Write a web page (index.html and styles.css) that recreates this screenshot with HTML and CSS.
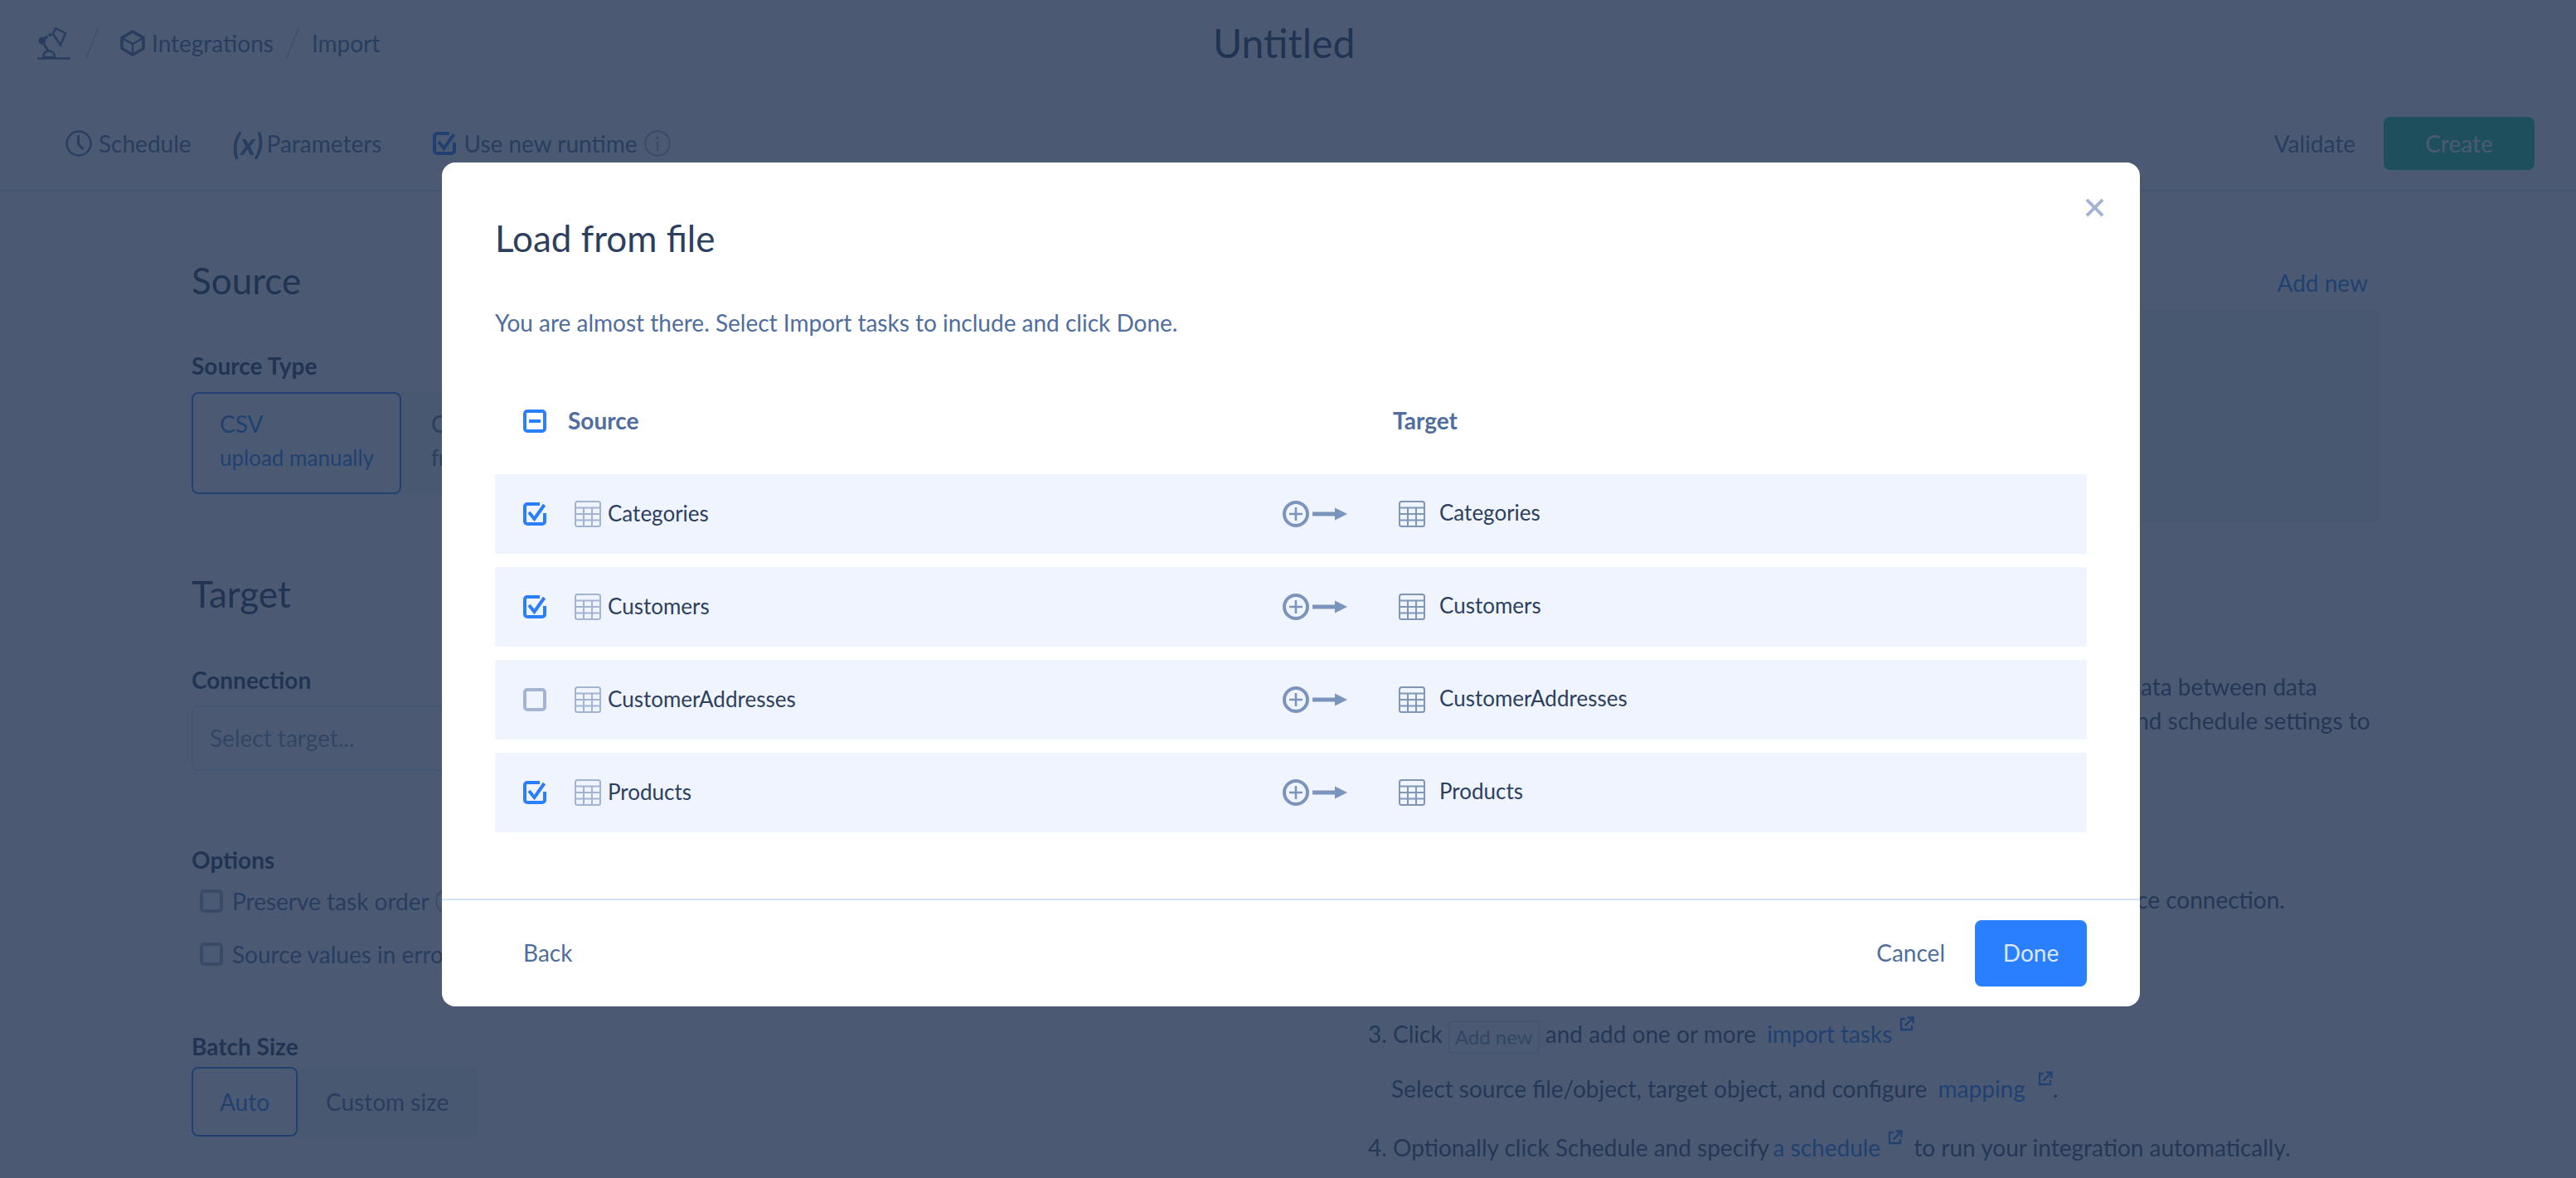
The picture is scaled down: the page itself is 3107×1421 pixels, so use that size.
FILE: index.html
```html
<!DOCTYPE html>
<html lang="en">
<head>
<meta charset="utf-8">
<title>Untitled</title>
<link rel="stylesheet" href="styles.css">
</head>
<body>
<svg class="sprite" xmlns="http://www.w3.org/2000/svg">
  <symbol id="checked" viewBox="0 0 28 28"><path d="M20 2H5a3 3 0 0 0-3 3v18a3 3 0 0 0 3 3h18a3 3 0 0 0 3-3V13" fill="none" stroke="currentColor" stroke-width="4"/><path d="M7 12l6.500 8L25.500 3" fill="none" stroke="currentColor" stroke-width="4"/></symbol>
  <symbol id="mixed" viewBox="0 0 28 28"><rect x="2" y="2" width="24" height="24" rx="3" fill="none" stroke="currentColor" stroke-width="4"/><path d="M7 14h14" stroke="currentColor" stroke-width="4"/></symbol>
  <symbol id="empty" viewBox="0 0 28 28"><rect x="2" y="2" width="24" height="24" rx="3" fill="none" stroke="currentColor" stroke-width="4"/></symbol>
  <symbol id="table" viewBox="0 0 32 32"><rect x="1" y="1" width="30" height="30" rx="2.5" fill="none" stroke="currentColor" stroke-width="2"/><path d="M1 8.500h30M1 16h30M1 23.500h30M11 8.500V31M21 8.500V31" fill="none" stroke="currentColor" stroke-width="2"/></symbol>
  <symbol id="map" viewBox="0 0 78 32"><circle cx="16" cy="16" r="14" fill="none" stroke="currentColor" stroke-width="4"/><path d="M16 8v16M8 16h16" stroke="currentColor" stroke-width="2.600"/><path d="M36 13.500h27V8.500l15 7.500-15 7.500V18.500H36z" fill="currentColor"/></symbol>
  <symbol id="ext" viewBox="0 0 18 18"><path d="M7 3H2v13h13v-5" fill="none" stroke="currentColor" stroke-width="2.400"/><path d="M6.500 11.500 16 2M9.500 1.500H16.500V8.500" fill="none" stroke="currentColor" stroke-width="2.400"/></symbol>
  <symbol id="info" viewBox="0 0 32 32"><circle cx="16" cy="16" r="14.800" fill="none" stroke="currentColor" stroke-width="2"/><circle cx="16" cy="9.500" r="1.800" fill="currentColor"/><path d="M16 14v11" stroke="currentColor" stroke-width="2.400"/></symbol>
</svg>

<header class="topbar">
  <nav class="crumbs">
    <svg class="logo" viewBox="0 0 40 40"><path d="M0 38.500h40" stroke="currentColor" stroke-width="2.500"/><path d="M7 37c0-5 3-7.500 7-7.500s7 2.500 7 7.500z" fill="none" stroke="currentColor" stroke-width="2.500"/><path d="M13 29 8 21" stroke="currentColor" stroke-width="3"/><circle cx="6" cy="17" r="4.500" fill="currentColor"/><path d="M9 14 19 8" stroke="currentColor" stroke-width="3.500" stroke-dasharray="4 1.500"/><path d="M22 2l12 6-6 14.500L19 9z" fill="none" stroke="currentColor" stroke-width="2.500"/></svg>
    <span class="slash slash-first"></span>
    <svg class="cube" viewBox="0 0 30 32"><path d="M15 2 28 9.500v13L15 30 2 22.500v-13z" fill="none" stroke="currentColor" stroke-width="3.600"/><path d="M2.500 10 15 17l12.500-7M15 17v13" fill="none" stroke="currentColor" stroke-width="2.400"/></svg>
    <span class="crumb">Integrations</span>
    <span class="slash slash-second"></span>
    <span class="crumb">Import</span>
  </nav>
  <h1 class="page-title">Untitled</h1>
</header>

<div class="toolbar">
  <span class="tool tool-schedule">
    <svg class="ico32" viewBox="0 0 32 32"><circle cx="16" cy="16" r="14.500" fill="none" stroke="currentColor" stroke-width="2.400"/><path d="M15.500 6v11l6 6" fill="none" stroke="currentColor" stroke-width="3"/></svg>
    Schedule
  </span>
  <span class="tool tool-params"><i class="x-mark">(x)</i>Parameters</span>
  <span class="tool tool-runtime">
    <svg class="check-blue"><use href="#checked"/></svg>
    Use new runtime
    <svg class="ico32 faint"><use href="#info"/></svg>
  </span>
  <span class="toolbar-end">
    <span class="validate">Validate</span>
    <span class="create">Create</span>
  </span>
</div>

<main class="content">
  <section class="col-left">
    <h2 class="section-title title-source">Source</h2>
    <h3 class="label label-type">Source Type</h3>
    <div class="choices">
      <div class="choice choice-on"><b>CSV</b><small>upload manually</small></div>
      <div class="choice choice-off"><b>CSV</b><small>from file storage</small></div>
    </div>
    <h2 class="section-title title-target">Target</h2>
    <h3 class="label label-conn">Connection</h3>
    <div class="select">Select target...</div>
    <h3 class="label label-opts">Options</h3>
    <label class="opt opt-first"><svg class="check-dim"><use href="#empty"/></svg>Preserve task order<svg class="ico32 faint opt-info"><use href="#info"/></svg></label>
    <label class="opt"><svg class="check-dim"><use href="#empty"/></svg>Source values in error log</label>
    <h3 class="label label-batch">Batch Size</h3>
    <div class="batch">
      <div class="batch-auto">Auto</div>
      <div class="batch-custom">Custom size</div>
    </div>
  </section>

  <section class="col-right">
    <div class="add-row"><span class="add-new">Add new</span></div>
    <div class="tasks-panel"></div>
    <p class="intro">Import integrations help you quickly and easily move and load large sets of data between data<br>sources. Configure the source, the targets, the tasks, and all of the options and schedule settings to<br>run them.</p>
    <p class="step step-2">2. Select the target connection that you want to use as the data for the source connection.</p>
    <p class="step step-3">3. Click <span class="kbd">Add new</span> and add one or more <a class="link link-a">import tasks<svg class="ext"><use href="#ext"/></svg></a></p>
    <p class="step step-sub">Select source file/object, target object, and configure <a class="link link-b">mapping<svg class="ext ext-b"><use href="#ext"/></svg></a>.</p>
    <p class="step step-4">4. Optionally click Schedule and specify <a class="link link-c">a schedule<svg class="ext ext-c"><use href="#ext"/></svg></a> to run your integration automatically.</p>
  </section>
</main>

<div class="backdrop">
  <div class="modal">
    <button class="close" aria-label="Close"><svg viewBox="0 0 24 24"><path d="M2 2l20 20M22 2 2 22" fill="none" stroke="currentColor" stroke-width="4"/></svg></button>
    <div class="modal-body">
      <h2 class="modal-title">Load from file</h2>
      <p class="modal-desc">You are almost there. Select Import tasks to include and click Done.</p>
      <div class="map-head">
        <svg class="cb cb-on"><use href="#mixed"/></svg>
        <span class="head-source">Source</span>
        <span class="head-target">Target</span>
      </div>
      <div class="map-rows">
        <div class="map-row">
          <svg class="cb cb-on"><use href="#checked"/></svg>
          <svg class="tbl tbl-light"><use href="#table"/></svg>
          <span class="src-name">Categories</span>
          <svg class="arrow"><use href="#map"/></svg>
          <svg class="tbl tbl-dark"><use href="#table"/></svg>
          <span class="tgt-name">Categories</span>
        </div>
        <div class="map-row">
          <svg class="cb cb-on"><use href="#checked"/></svg>
          <svg class="tbl tbl-light"><use href="#table"/></svg>
          <span class="src-name">Customers</span>
          <svg class="arrow"><use href="#map"/></svg>
          <svg class="tbl tbl-dark"><use href="#table"/></svg>
          <span class="tgt-name">Customers</span>
        </div>
        <div class="map-row">
          <svg class="cb cb-off"><use href="#empty"/></svg>
          <svg class="tbl tbl-light"><use href="#table"/></svg>
          <span class="src-name">CustomerAddresses</span>
          <svg class="arrow"><use href="#map"/></svg>
          <svg class="tbl tbl-dark"><use href="#table"/></svg>
          <span class="tgt-name">CustomerAddresses</span>
        </div>
        <div class="map-row">
          <svg class="cb cb-on"><use href="#checked"/></svg>
          <svg class="tbl tbl-light"><use href="#table"/></svg>
          <span class="src-name">Products</span>
          <svg class="arrow"><use href="#map"/></svg>
          <svg class="tbl tbl-dark"><use href="#table"/></svg>
          <span class="tgt-name">Products</span>
        </div>
      </div>
    </div>
    <footer class="modal-foot">
      <span class="btn-back">Back</span>
      <span class="btn-cancel">Cancel</span>
      <span class="btn-done">Done</span>
    </footer>
  </div>
</div>
</body>
</html>
```
FILE: styles.css
```css
* { box-sizing: border-box; }
html, body { margin: 0; height: 100%; overflow: hidden; }
body {
  background: #fff;
  color: #2d3f5e;
  font-family: Lato, "Open Sans", sans-serif;
  font-size: 28px;
  line-height: 40px;
  position: relative;
}
h1, h2, h3, p { margin: 0; font-weight: 400; }
.sprite { position: absolute; width: 0; height: 0; }

/* top bar */
.topbar {
  height: 117px;
  display: flex;
  align-items: center;
  position: relative;
  border-bottom: 1px solid #e9eef8;
  background: #fff;
}
.crumbs { display: flex; align-items: center; padding: 0 0 12px 45px; height: 100%; color: #4f6d9f; }
.logo { width: 40px; height: 40px; color: #4f6d9f; }
.cube { width: 30px; height: 32px; margin-right: 8px; }
.slash {
  width: 2px; height: 40px;
  background: #c5d2e8;
  transform: rotate(22deg);
}
.slash-first { margin: 0 33px 0 25px; }
.slash-second { margin: 0 22px; }
.page-title {
  position: absolute;
  left: 1463px; top: 22px;
  font-size: 48px; line-height: 60px;
  color: #2d3f5e;
}

/* toolbar */
.toolbar {
  height: 114px;
  display: flex;
  align-items: center;
  padding: 0 50px 0 79px;
  border-bottom: 2px solid #d5e3f9;
  color: #4f6d9f;
}
.tool { display: flex; align-items: center; gap: 8px; }
.tool-schedule { margin-right: 50px; }
.tool-params { margin-right: 62px; gap: 4px; }
.ico32 { width: 32px; height: 32px; }
.faint { color: #a3b4d2; }
.x-mark { font-size: 36px; font-weight: 700; font-style: italic; width: 37px; white-space: nowrap; }
.check-blue { width: 28px; height: 28px; color: #2a7fff; margin-right: 1px; }
.toolbar-end { margin-left: auto; display: flex; align-items: center; gap: 34px; }
.validate { color: #4f6d9f; }
.create {
  width: 182px; height: 64px;
  background: #19c891; color: #fff;
  border-radius: 8px;
  display: flex; align-items: center; justify-content: center;
}

/* page body */
.content { display: flex; padding-left: 231px; }
.col-left { width: 1419px; flex: none; }
.col-right { width: 1221px; flex: none; }
.section-title { font-size: 44px; line-height: 56px; color: #2d3f5e; }
.title-source { margin-top: 79px; }
.label { font-size: 28px; font-weight: 700; line-height: 40px; color: #2d3f5e; }
.label-type { margin-top: 55px; }
.choices { display: flex; margin-top: 12px; }
.choice { height: 123px; padding: 16px 32px 0; border-radius: 8px; }
.choice b, .choice small { display: block; font-weight: 400; white-space: nowrap; }
.choice b { font-size: 28px; line-height: 40px; }
.choice small { font-size: 26px; line-height: 40px; margin-top: 1px; }
.choice-on { width: 253px; border: 2px solid #2a7fff; color: #2a7fff; }
.choice-off { width: 260px; background: #f0f3f9; color: #4f6d9f; border-radius: 0 8px 8px 0; padding-left: 36px; padding-top: 18px; }
.title-target { margin-top: 92px; }
.label-conn { margin-top: 56px; }
.select {
  width: 600px; height: 79px; margin-top: 11px;
  border: 2px solid #d5e3f9; border-radius: 8px;
  padding: 17px 20px; color: #7f96b9;
}
.label-opts { margin-top: 87px; }
.opt { display: flex; align-items: center; height: 40px; padding-left: 10px; gap: 11px; color: #4f6d9f; }
.opt-first { margin-top: 10px; margin-bottom: 24px; }
.opt-info { margin-left: -4px; }
.check-dim { width: 28px; height: 28px; color: #a3b4d2; }
.label-batch { margin-top: 71px; }
.batch { display: flex; height: 84px; margin-top: 5px; }
.batch-auto {
  width: 128px; border: 2px solid #2a7fff; border-radius: 8px; color: #2a7fff;
  display: flex; align-items: center; justify-content: center;
}
.batch-custom {
  width: 217px; background: #f0f3f9; color: #4f6d9f; border-radius: 0 8px 8px 0;
  display: flex; align-items: center; padding-left: 34px;
}
.add-row { display: flex; justify-content: flex-end; padding-right: 15px; margin-top: 90px; height: 53px; }
.add-new { color: #2a7fff; }
.tasks-panel { height: 256px; width: 1221px; background: #f0f3f9; border-radius: 8px; }
.intro { margin-top: 178px; line-height: 41px; white-space: nowrap; color: #3d5176; }
.step { white-space: nowrap; color: #3d5176; }
.step-2 { margin-top: 134px; }
.step-3 { margin-top: 121px; }
.step-sub { margin-top: 21px; padding-left: 28px; }
.step-4 { margin-top: 30px; }
.kbd {
  display: inline-block;
  font-size: 24px; line-height: 36px;
  border: 2px solid #d5e3f9; border-radius: 4px;
  padding: 0 6px; vertical-align: middle;
  color: #7f96b9;
}
.link { color: #2a7fff; margin-left: 6px; }
.link-c { margin-left: -2px; }
.ext { width: 18px; height: 18px; margin-left: 9px; vertical-align: 14px; }
.ext-b { margin-left: 15px; }
.ext-c { margin-right: 6px; }

/* dialog */
.backdrop {
  position: fixed; inset: 0;
  background: rgba(30, 49, 79, .8);
  padding: 196px 0 0 533px;
}
.modal {
  width: 2048px;
  background: #fff;
  border-radius: 16px;
  position: relative;
}
.close {
  position: absolute; right: 43px; top: 43px;
  width: 23px; height: 23px;
  padding: 0; border: 0; background: none;
  color: #a3b4d2; display: flex;
}
.close svg { width: 100%; height: 100%; }
.modal-body { padding: 65px 64px 80px; }
.modal-title { font-size: 44px; line-height: 52px; color: #2d3f5e; }
.modal-desc { margin-top: 56px; color: #4f6d9f; }
.map-head {
  display: flex; align-items: center;
  height: 56px; margin-top: 71px; padding-left: 34px;
  color: #4f6d9f; font-weight: 700;
}
.head-source { margin: -3px 0 0 26px; }
.head-target { margin: -3px 0 0 auto; width: 837px; }
.map-rows { display: flex; flex-direction: column; gap: 16px; margin-top: 36px; }
.map-row {
  height: 96px; background: #eff4fe;
  display: flex; align-items: center;
  padding-left: 34px;
  font-size: 26px;
}
.cb { width: 28px; height: 28px; flex: none; }
.cb-on { color: #2a7fff; }
.cb-off { color: #a3b4d2; }
.tbl { width: 32px; height: 32px; flex: none; }
.tbl-light { color: #a3b4d2; margin-left: 34px; }
.tbl-dark { color: #7f96b9; margin-left: 62px; }
.src-name { width: 814px; margin-left: 8px; line-height: 40px; margin-top: -2px; }
.tgt-name { margin-left: 17px; margin-top: -4px; }
.arrow { width: 78px; height: 32px; color: #7b94bb; flex: none; }
.modal-foot {
  border-top: 2px solid #d5e3f9;
  padding: 24px 64px;
  display: flex; align-items: center;
  color: #4f6d9f;
}
.btn-back { margin: -3px auto 0 34px; }
.btn-cancel { margin: -3px 36px 0 0; }
.btn-done {
  width: 135px; height: 80px;
  padding-bottom: 3px;
  border-radius: 8px;
  background: #2a7fff; color: #dbe8ff;
  display: flex; align-items: center; justify-content: center;
}
```
